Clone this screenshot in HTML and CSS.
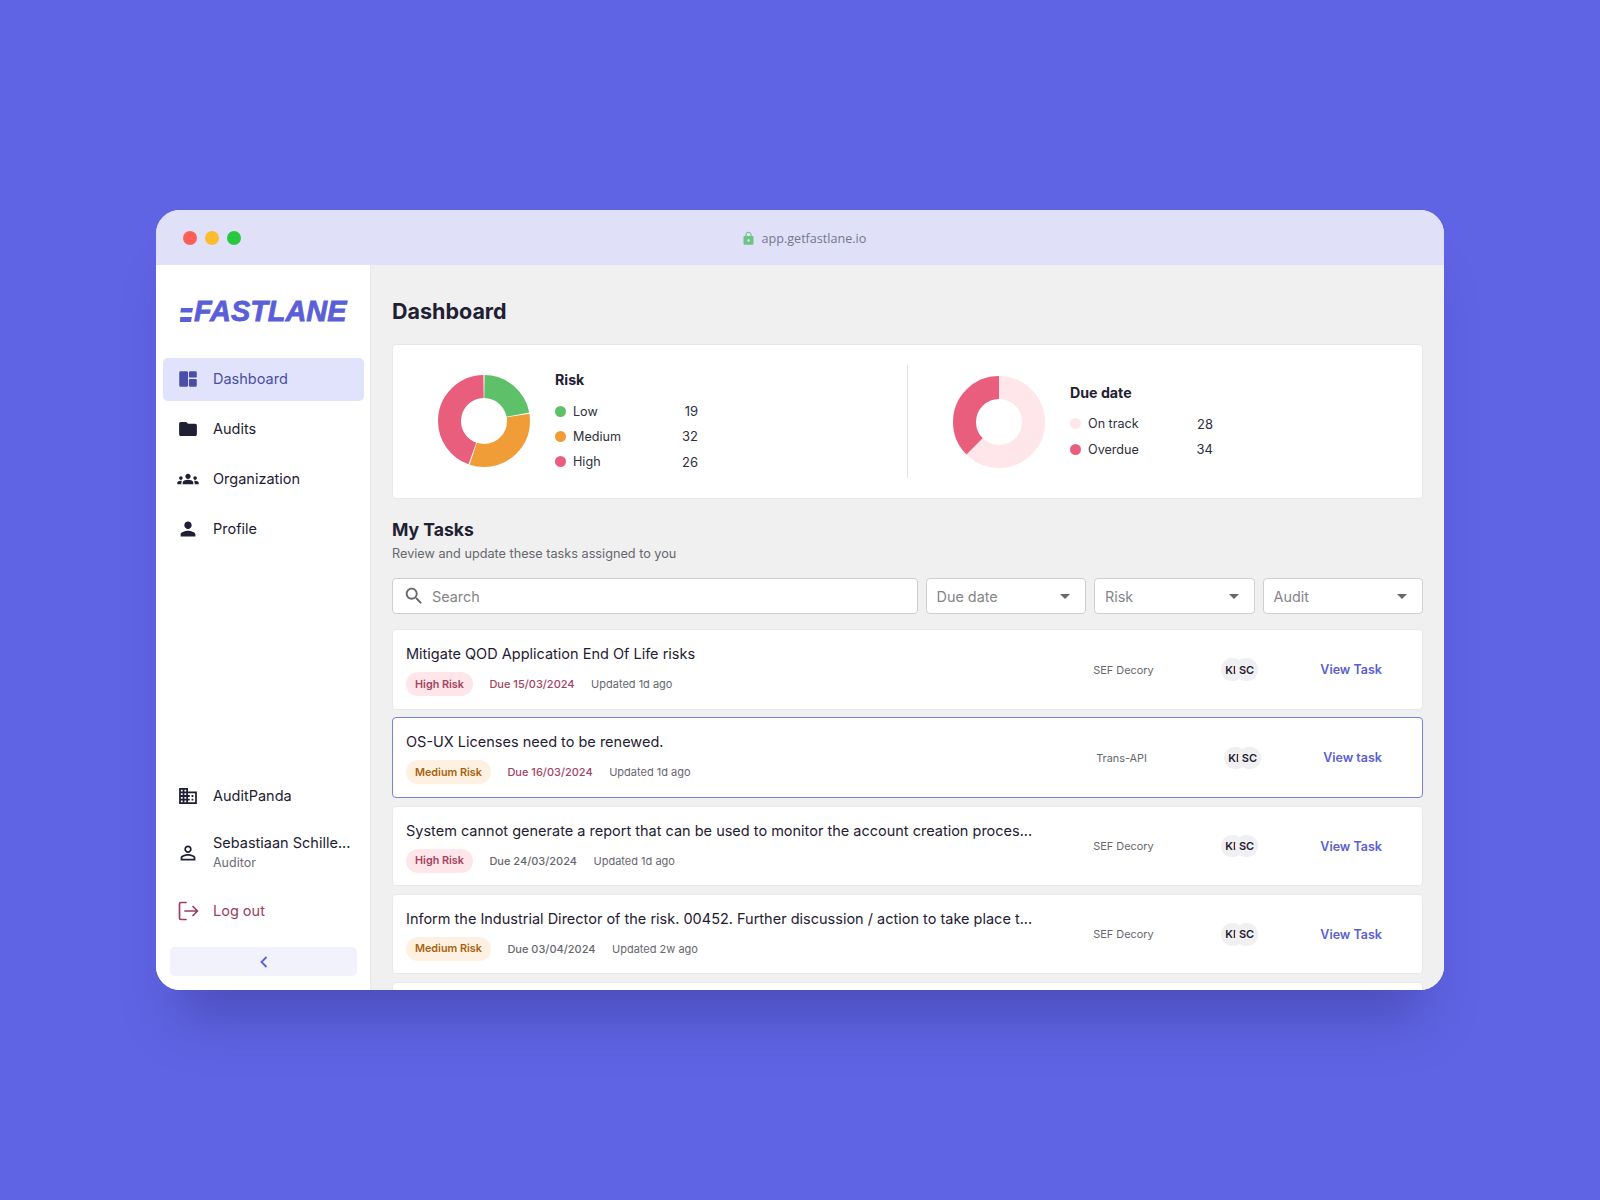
FILE: index.html
```html
<!DOCTYPE html>
<html lang="en">
<head>
<meta charset="utf-8">
<title>Fastlane Dashboard</title>
<link rel="stylesheet" href="styles.css">
</head>
<body>
<div class="window">
  <header class="titlebar">
    <div class="lights"><span class="light red"></span><span class="light yellow"></span><span class="light green"></span></div>
    <div class="url">
      <svg class="lock" viewBox="0 0 24 24"><path d="M18 8h-1V6c0-2.76-2.24-5-5-5S7 3.24 7 6v2H6c-1.1 0-2 .9-2 2v10c0 1.1.9 2 2 2h12c1.1 0 2-.9 2-2V10c0-1.1-.9-2-2-2zm-6 9c-1.1 0-2-.9-2-2s.9-2 2-2 2 .9 2 2-.9 2-2 2zm3.1-9H8.9V6c0-1.71 1.39-3.1 3.1-3.1 1.71 0 3.1 1.39 3.1 3.1v2z"/></svg>
      <span>app.getfastlane.io</span>
    </div>
  </header>
  <div class="app">
    <aside class="sidebar">
      <div class="logo">
        <svg class="logo-mark" viewBox="0 0 13 14"><polygon points="1,0 13,0 12.2,4.5 0.3,4.5"/><polygon points="0.2,9 11.8,9 11,14 0,14"/></svg>
        <span class="logo-text">FASTLANE</span>
      </div>
      <nav class="nav">
        <a class="nav-item active">
          <svg class="icon" viewBox="-1 -1 26 26"><path d="M4 3.500h6.500a1.500 1.500 0 0 1 1.500 1.500v14a1.500 1.500 0 0 1-1.500 1.500H4A1.500 1.500 0 0 1 2.500 19V5A1.500 1.500 0 0 1 4 3.500zM14.500 3.500H20A1.500 1.500 0 0 1 21.500 5v4.500a1 1 0 0 1-1 1H14a1 1 0 0 1-1-1V5a1.500 1.500 0 0 1 1.500-1.500zM14 12h6.500a1 1 0 0 1 1 1v6a1.500 1.500 0 0 1-1.500 1.500h-5.500A1.500 1.500 0 0 1 13 19v-6a1 1 0 0 1 1-1z"/></svg>
          <span>Dashboard</span>
        </a>
        <a class="nav-item">
          <svg class="icon" viewBox="-1.500 -1.500 27 27"><path d="M10 4H4c-1.100 0-1.990.9-1.990 2L2 18c0 1.100.9 2 2 2h16c1.100 0 2-.9 2-2V8c0-1.100-.9-2-2-2h-8l-2-2z"/></svg>
          <span>Audits</span>
        </a>
        <a class="nav-item">
          <svg class="icon" viewBox="-1.500 -1.500 27 27"><path d="M12 12.750c1.630 0 3.070.39 4.240.9 1.080.48 1.760 1.560 1.760 2.730V18H6v-1.610c0-1.180.68-2.260 1.760-2.730 1.170-.52 2.610-.91 4.240-.91zM4 13c1.100 0 2-.9 2-2s-.9-2-2-2-2 .9-2 2 .9 2 2 2zm1.130 1.100c-.37-.06-.74-.1-1.130-.1-.99 0-1.930.21-2.780.58C.48 14.900 0 15.620 0 16.430V18h4.500v-1.610c0-.83.23-1.610.63-2.290zM20 13c1.100 0 2-.9 2-2s-.9-2-2-2-2 .9-2 2 .9 2 2 2zm4 3.430c0-.81-.48-1.530-1.220-1.850-.85-.37-1.790-.58-2.780-.58-.39 0-.76.04-1.130.1.4.68.63 1.460.63 2.290V18H24v-1.570zM12 6c1.660 0 3 1.340 3 3s-1.340 3-3 3-3-1.340-3-3 1.340-3 3-3z"/></svg>
          <span>Organization</span>
        </a>
        <a class="nav-item">
          <svg class="icon" viewBox="-1 -1 26 26"><path d="M12 12c2.210 0 4-1.790 4-4s-1.790-4-4-4-4 1.790-4 4 1.790 4 4 4zm0 2c-2.670 0-8 1.340-8 4v2h16v-2c0-2.660-5.330-4-8-4z"/></svg>
          <span>Profile</span>
        </a>
      </nav>
      <div class="sidebar-bottom">
        <a class="nav-item">
          <svg class="icon" viewBox="-1.500 -1.500 27 27"><path d="M12 7V3H2v18h20V7H12zM6 19H4v-2h2v2zm0-4H4v-2h2v2zm0-4H4V9h2v2zm0-4H4V5h2v2zm4 12H8v-2h2v2zm0-4H8v-2h2v2zm0-4H8V9h2v2zm0-4H8V5h2v2zm10 12h-8v-2h2v-2h-2v-2h2v-2h-2V9h8v10zm-2-8h-2v2h2v-2zm0 4h-2v2h2v-2z"/></svg>
          <span>AuditPanda</span>
        </a>
        <a class="nav-item user">
          <svg class="icon" viewBox="-1 -1 26 26"><path d="M12 5.900c1.160 0 2.100.94 2.100 2.100s-.94 2.100-2.100 2.100S9.900 9.160 9.900 8s.94-2.100 2.100-2.100m0 9c2.970 0 6.100 1.460 6.100 2.100v1.100H5.900V17c0-.64 3.130-2.100 6.100-2.100M12 4C9.790 4 8 5.790 8 8s1.790 4 4 4 4-1.790 4-4-1.790-4-4-4zm0 9c-2.670 0-8 1.340-8 4v3h16v-3c0-2.660-5.330-4-8-4z"/></svg>
          <span class="user-text"><span class="user-name">Sebastiaan Schille...</span><span class="user-role">Auditor</span></span>
        </a>
        <a class="nav-item logout">
          <svg class="icon icon-line" viewBox="0 0 24 24"><path d="M10 3.500H5a1.500 1.500 0 0 0-1.500 1.500v14A1.500 1.500 0 0 0 5 20.500h5M9 12h12.500M17 7.500l4.500 4.500-4.500 4.500"/></svg>
          <span>Log out</span>
        </a>
        <button class="collapse" type="button" aria-label="Collapse">
          <svg class="chevron" viewBox="0 0 10 14"><path d="M7.500 2 2.500 7l5 5"/></svg>
        </button>
      </div>
    </aside>
    <main class="main">
      <h1 class="page-title">Dashboard</h1>
      <section class="charts">
        <div class="chart-panel">
          <svg class="donut" viewBox="0 0 92 92">
            <g class="donut-ring">
              <circle class="seg seg-green" cx="46" cy="46" r="34.500" pathLength="360" stroke-dasharray="78.500 281.500" stroke-dashoffset="-0.750"/>
              <circle class="seg seg-orange" cx="46" cy="46" r="34.500" pathLength="360" stroke-dasharray="117.500 242.500" stroke-dashoffset="-80.750"/>
              <circle class="seg seg-red" cx="46" cy="46" r="34.500" pathLength="360" stroke-dasharray="159.500 200.500" stroke-dashoffset="-199.750"/>
            </g>
          </svg>
          <div class="legend">
            <div class="legend-title">Risk</div>
            <div class="legend-row"><span class="dot dot-green"></span><span class="legend-label">Low</span><span class="legend-value">19</span></div>
            <div class="legend-row"><span class="dot dot-orange"></span><span class="legend-label">Medium</span><span class="legend-value">32</span></div>
            <div class="legend-row"><span class="dot dot-red"></span><span class="legend-label">High</span><span class="legend-value">26</span></div>
          </div>
        </div>
        <div class="chart-divider"></div>
        <div class="chart-panel">
          <svg class="donut" viewBox="0 0 92 92">
            <g class="donut-ring">
              <circle class="seg seg-pink" cx="46" cy="46" r="34.500" pathLength="360" stroke-dasharray="225 135" stroke-dashoffset="0"/>
              <circle class="seg seg-red" cx="46" cy="46" r="34.500" pathLength="360" stroke-dasharray="135 225" stroke-dashoffset="-225"/>
            </g>
          </svg>
          <div class="legend">
            <div class="legend-title">Due date</div>
            <div class="legend-row"><span class="dot dot-pink"></span><span class="legend-label">On track</span><span class="legend-value">28</span></div>
            <div class="legend-row"><span class="dot dot-red"></span><span class="legend-label">Overdue</span><span class="legend-value">34</span></div>
          </div>
        </div>
      </section>
      <h2 class="section-title">My Tasks</h2>
      <p class="section-sub">Review and update these tasks assigned to you</p>
      <div class="filters">
        <div class="search field">
          <svg class="search-icon" viewBox="0 0 24 24"><path d="M15.500 14h-.79l-.28-.27C15.410 12.590 16 11.110 16 9.500 16 5.910 13.090 3 9.500 3S3 5.910 3 9.500 5.910 16 9.500 16c1.610 0 3.090-.59 4.230-1.570l.27.28v.79l5 4.990L20.490 19l-4.990-5zm-6 0C7.010 14 5 11.990 5 9.500S7.010 5 9.500 5 14 7.010 14 9.500 11.990 14 9.500 14z"/></svg>
          <span>Search</span>
        </div>
        <div class="select field"><span>Due date</span><i class="caret"></i></div>
        <div class="select field"><span>Risk</span><i class="caret"></i></div>
        <div class="select field"><span>Audit</span><i class="caret"></i></div>
      </div>
      <div class="tasks">
        <article class="task">
          <div class="task-body">
            <div class="task-title">Mitigate QOD Application End Of Life risks</div>
            <div class="task-meta"><span class="pill pill-high">High Risk</span><span class="due overdue">Due 15/03/2024</span><span class="updated">Updated 1d ago</span></div>
          </div>
          <div class="task-audit">SEF Decory</div>
          <div class="avatars"><span class="avatar avatar-back">KI</span><span class="avatar">SC</span></div>
          <a class="task-link">View Task</a>
        </article>
        <article class="task task-selected">
          <div class="task-body">
            <div class="task-title">OS-UX Licenses need to be renewed.</div>
            <div class="task-meta"><span class="pill pill-medium">Medium Risk</span><span class="due overdue">Due 16/03/2024</span><span class="updated">Updated 1d ago</span></div>
          </div>
          <div class="task-audit">Trans-API</div>
          <div class="avatars"><span class="avatar avatar-back">KI</span><span class="avatar">SC</span></div>
          <a class="task-link">View task</a>
        </article>
        <article class="task">
          <div class="task-body">
            <div class="task-title">System cannot generate a report that can be used to monitor the account creation proces...</div>
            <div class="task-meta"><span class="pill pill-high">High Risk</span><span class="due">Due 24/03/2024</span><span class="updated">Updated 1d ago</span></div>
          </div>
          <div class="task-audit">SEF Decory</div>
          <div class="avatars"><span class="avatar avatar-back">KI</span><span class="avatar">SC</span></div>
          <a class="task-link">View Task</a>
        </article>
        <article class="task">
          <div class="task-body">
            <div class="task-title">Inform the Industrial Director of the risk. 00452. Further discussion / action to take place t...</div>
            <div class="task-meta"><span class="pill pill-medium">Medium Risk</span><span class="due">Due 03/04/2024</span><span class="updated">Updated 2w ago</span></div>
          </div>
          <div class="task-audit">SEF Decory</div>
          <div class="avatars"><span class="avatar avatar-back">KI</span><span class="avatar">SC</span></div>
          <a class="task-link">View Task</a>
        </article>
        <article class="task"></article>
      </div>
    </main>
  </div>
</div>
</body>
</html>
```
FILE: styles.css
```css
* { box-sizing: border-box; }
html, body { height: 100%; }
body {
  margin: 0;
  background: #5f64e4;
  display: flex;
  align-items: center;
  justify-content: center;
  font-family: Inter, "Noto Sans", sans-serif;
  color: #1f2033;
}
.window {
  width: 1288px;
  height: 780px;
  border-radius: 24px;
  background: #fff;
  display: flex;
  flex-direction: column;
  overflow: hidden;
  box-shadow: 0 50px 50px -24px rgba(40, 40, 110, .36);
}
.titlebar {
  height: 55px;
  flex: none;
  background: #e0e1f8;
  display: flex;
  align-items: center;
  position: relative;
  padding-left: 27px;
}
.lights { display: flex; gap: 8px; }
.light { width: 14px; height: 14px; border-radius: 50%; }
.red { background: #fb5f57; }
.yellow { background: #fdbc2e; }
.green { background: #27c840; }
.url {
  position: absolute;
  left: 584.500px;
  top: 1px;
  height: 55px;
  display: flex;
  align-items: center;
  gap: 6px;
  font-family: "Open Sans", sans-serif;
  font-size: 12.600px;
  color: #74768f;
}
.lock { width: 15px; height: 15px; fill: #6cc583; }
.app { flex: 1; display: flex; min-height: 0; }
.sidebar {
  width: 215px;
  flex: none;
  background: #fff;
  border-right: 1px solid #eaeaea;
  padding: 0 6px 14px 7px;
  display: flex;
  flex-direction: column;
}
.logo {
  height: 93px;
  flex: none;
  display: flex;
  align-items: center;
  padding-left: 17px;
  gap: 1px;
}
.logo-mark { width: 13px; height: 14px; fill: #5a5fd8; margin-top: 6px; flex: none; }
.logo-text {
  font-family: "Liberation Sans", Arial, sans-serif;
  font-weight: 700;
  font-style: italic;
  font-size: 28.900px;
  line-height: 1;
  color: #5a5fd8;
  -webkit-text-stroke: .8px #5a5fd8;
}
.nav, .sidebar-bottom { display: flex; flex-direction: column; gap: 7px; }
.sidebar-bottom { margin-top: auto; }
.nav-item {
  min-height: 43px;
  padding: 0 0 2px 13px;
  border-radius: 5px;
  display: flex;
  align-items: center;
  gap: 13px;
  font-size: 14.500px;
  color: #1f2033;
}
.icon { width: 24px; height: 24px; flex: none; fill: #1f2033; }
.active { background: #e0e3fb; color: #4a4ea8; }
.active .icon { fill: #4a4ea8; }
.user { min-height: 58px; padding-bottom: 3px; }
.user-text { display: flex; flex-direction: column; }
.user-name { line-height: 20px; white-space: nowrap; }
.user-role { font-size: 12.500px; line-height: 18px; margin-top: 1px; color: #6b6c76; }
.logout { color: #9c3d5a; }
.icon-line {
  fill: none;
  stroke: #9c3d5a;
  stroke-width: 1.700;
  stroke-linecap: round;
  stroke-linejoin: round;
}
.collapse {
  height: 29px;
  margin: 7px 7px 0;
  border: 0;
  border-radius: 5px;
  background: #f1f2fb;
  display: flex;
  align-items: center;
  justify-content: center;
  padding: 0;
}
.chevron { width: 10px; height: 14px; fill: none; stroke: #5a5fd8; stroke-width: 1.800; }
.main {
  flex: 1;
  min-width: 0;
  background: #f0f0f0;
  padding: 33px 21px 0;
  overflow: hidden;
}
.page-title {
  margin: 0 0 19px;
  font-size: 21.500px;
  line-height: 27px;
  font-weight: 700;
}
.charts {
  height: 155px;
  background: #fff;
  border: 1px solid #e8e8e8;
  border-radius: 4px;
  display: flex;
  align-items: center;
  padding-left: 45px;
}
.chart-panel { display: flex; align-items: center; gap: 25px; }
.chart-panel:first-child { width: 469px; }
.chart-divider { width: 1px; height: 113px; background: #e2e2e2; margin-right: 45px; }
.donut { width: 92px; height: 92px; flex: none; }
.donut-ring { transform: rotate(-90deg); transform-origin: 46px 46px; }
.seg { fill: none; stroke-width: 23; }
.seg-green { stroke: #5ec16a; }
.seg-orange { stroke: #f09d38; }
.seg-red { stroke: #e85e7c; }
.seg-pink { stroke: #ffe6ea; }
.legend { width: 143px; }
.legend-title { font-size: 14.200px; line-height: 20px; font-weight: 700; margin: 1.500px 0 8.500px; }
.legend-row {
  height: 25.300px;
  display: flex;
  align-items: center;
  font-size: 12.600px;
  color: #2e2f3e;
}
.legend-label { flex: 1; }
.legend-value { font-size: 13px; }
.dot { width: 11px; height: 11px; border-radius: 50%; margin-right: 7px; flex: none; }
.dot-green { background: #5ec16a; }
.dot-orange { background: #f09d38; }
.dot-red { background: #e85e7c; }
.dot-pink { background: #ffe6ea; }
.section-title {
  margin: 19px 0 3px;
  font-size: 17.600px;
  line-height: 24px;
  font-weight: 700;
}
.section-sub { margin: 0; font-size: 12.700px; line-height: 18px; color: #66676f; }
.filters { margin-top: 15px; display: flex; gap: 8px; height: 36px; }
.field {
  background: #fff;
  border: 1px solid #cfcfcf;
  border-radius: 4px;
  display: flex;
  align-items: center;
  font-size: 14.400px;
  color: #85858b;
}
.search { flex: 1; padding-left: 10px; gap: 7px; }
.search-icon { width: 22px; height: 22px; fill: #66676f; flex: none; }
.select { width: 160.500px; flex: none; padding: 0 15px 0 10px; justify-content: space-between; }
.caret {
  width: 0;
  height: 0;
  border-left: 5px solid transparent;
  border-right: 5px solid transparent;
  border-top: 5px solid #66676f;
}
.tasks { margin-top: 15px; display: flex; flex-direction: column; gap: 7.750px; }
.task {
  height: 80.500px;
  flex: none;
  background: #fff;
  border: 1px solid #e8e8e8;
  border-radius: 4px;
  padding: 13px 40px 0 13px;
  display: flex;
  align-items: flex-start;
}
.task-selected { border-color: #7c80d8; }
.task-body { flex: 1; min-width: 0; }
.task-title { font-size: 14.500px; line-height: 22px; white-space: nowrap; color: #1f2033; }
.task-meta { margin-top: 7px; display: flex; align-items: center; gap: 16.500px; font-size: 11px; color: #66676f; }
.pill { height: 24px; padding: 0 9px; border-radius: 12px; display: flex; align-items: center; font-size: 10.800px; font-weight: 600; }
.pill-high { background: #ffe6ea; color: #a5435f; }
.pill-medium { background: #fff1e2; color: #a8620f; }
.due { font-weight: 500; color: #66676f; }
.overdue { color: #a5435f; }
.task-audit, .avatars, .task-link { height: 53px; display: flex; align-items: center; flex: none; }
.task-audit { width: 128px; font-size: 10.900px; color: #66676f; }
.avatars { width: 99px; }
.avatar {
  width: 22.500px;
  height: 22.500px;
  border-radius: 50%;
  background: #f0f0f2;
  font-size: 11px;
  font-weight: 600;
  color: #1f2033;
  overflow: hidden;
  display: flex;
  justify-content: center;
  align-items: center;
  white-space: nowrap;
  flex: none;
  position: relative;
}
.avatar-back { justify-content: flex-start; padding-left: 4px; }
.avatar + .avatar { margin-left: -8.500px; }
.task-link { font-size: 12.500px; font-weight: 600; color: #5b5fcf; }
```
